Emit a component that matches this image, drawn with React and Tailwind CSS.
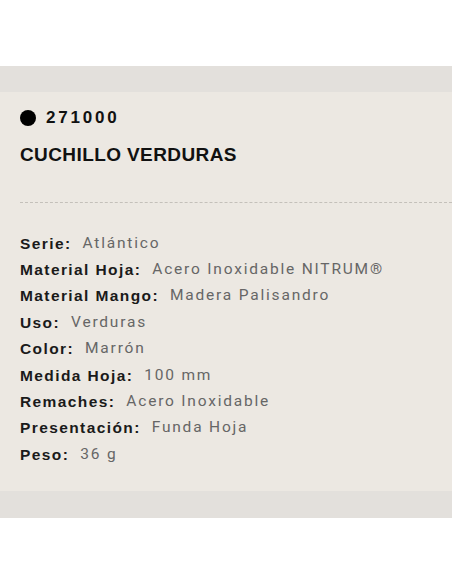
import React from "react";

const specs = [
  ["Serie", "Atlántico"],
  ["Material Hoja", "Acero Inoxidable NITRUM®"],
  ["Material Mango", "Madera Palisandro"],
  ["Uso", "Verduras"],
  ["Color", "Marrón"],
  ["Medida Hoja", "100 mm"],
  ["Remaches", "Acero Inoxidable"],
  ["Presentación", "Funda Hoja"],
  ["Peso", "36 g"],
];

const App = () => {
  return (
    <div className="w-[452px] h-[584px] bg-white pt-[66px]">
      <div className="h-[26px] bg-[#e3e0dc]" />
      <div className="bg-[#ece8e2] pl-[20px] pt-[17px] h-[399px]">
        <div className="flex items-center gap-[10px] h-[18px]">
          <span className="w-[16px] h-[16px] rounded-full bg-black" />
          <span className="font-['Liberation_Sans'] font-bold text-[17px] tracking-[2.8px] text-[#111]">
            271000
          </span>
        </div>
        <h1 className="mt-[16px] font-['Liberation_Sans'] font-bold text-[19px] tracking-[0.4px] leading-[24px] text-[#111]">
          CUCHILLO VERDURAS
        </h1>
        <div className="mt-[35px] border-t border-dashed border-[#c4c0ba]" />
        <div className="mt-[27px]">
          {specs.map(([label, value]) => (
            <div key={label} className="flex items-center h-[26.4px]">
              <span className="font-['Liberation_Sans'] font-bold text-[15.5px] tracking-[1.4px] text-[#1a1a1a]">
                {label}:
              </span>
              <span className="ml-[11px] font-['Roboto'] text-[15.5px] tracking-[1.8px] text-[#666]">
                {value}
              </span>
            </div>
          ))}
        </div>
      </div>
      <div className="h-[27px] bg-[#e3e0dc]" />
    </div>
  );
};

export default App;
